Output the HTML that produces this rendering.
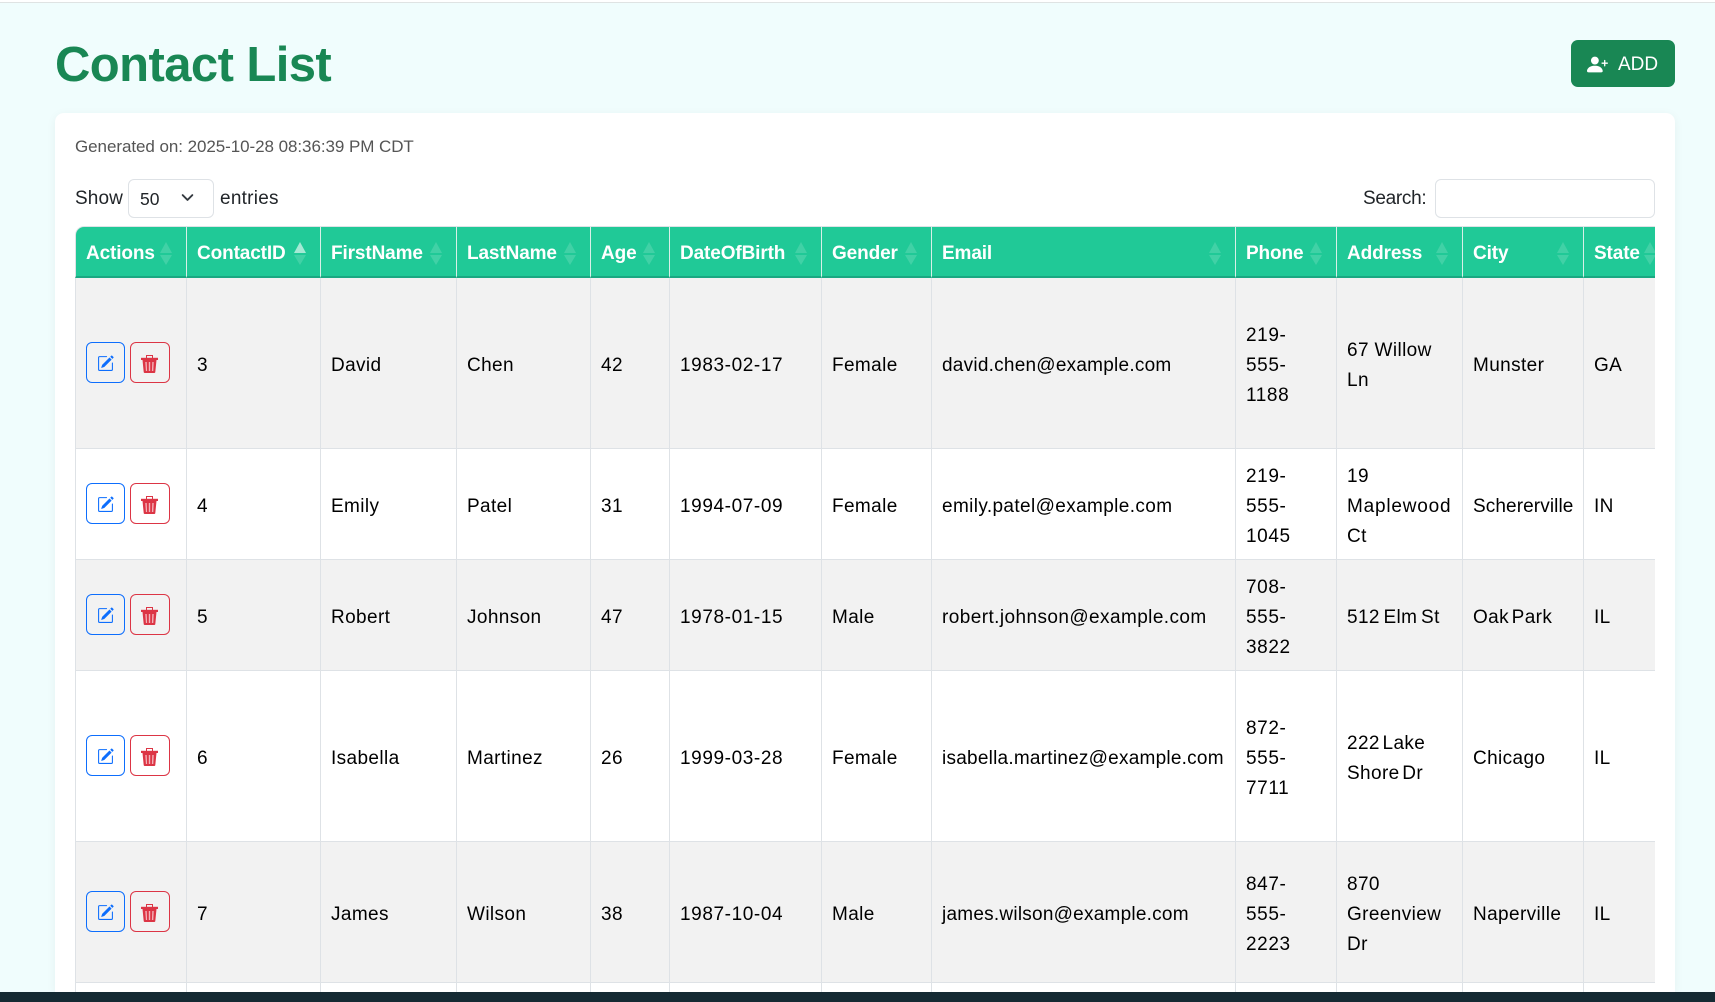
<!DOCTYPE html>
<html lang="en"><head><meta charset="utf-8"><title>Contact List</title>
<style>
*{box-sizing:border-box}
html,body{margin:0;padding:0;width:1715px;height:1002px;overflow:hidden;background:#f0fdfd;font-family:"Liberation Sans",Arial,sans-serif;color:#212529}
#root{position:relative;width:1715px;height:1002px;overflow:hidden}
.topline{position:absolute;left:0;top:0;width:1715px;height:3px;background:#fff;border-bottom:1px solid #dfe3e3}
h1{position:absolute;left:55px;top:35px;margin:0;font-size:49px;line-height:60px;font-weight:700;color:#198754;letter-spacing:-.58px}
.add{position:absolute;left:1571px;top:40px;width:104px;height:47px;background:#198754;border-radius:7px;color:#fff;font-size:19px;line-height:49px;padding-left:47px}
.add svg{position:absolute;left:16px;top:14px}
.card{position:absolute;left:55px;top:113px;width:1620px;height:879px;background:#fff;border-radius:9px 9px 0 0;box-shadow:0 2px 10px rgba(0,0,0,.05)}
.gen{position:absolute;left:75px;top:135px;font-size:17px;line-height:24px;color:#555;letter-spacing:-.06px}
.lbl{position:absolute;top:187px;font-size:19px;line-height:24px;color:#212529}
.sel{position:absolute;left:128px;top:179px;width:86px;height:39px;border:1px solid #dee2e6;border-radius:6px;font-size:17.5px;line-height:38px;padding-left:11px}
.sel svg{position:absolute;left:52px;top:11px}
.inp{position:absolute;left:1435px;top:179px;width:220px;height:39px;border:1px solid #dee2e6;border-radius:6px;background:#fff}
.wrap{position:absolute;left:75px;top:226px;width:1580px;height:766px;overflow:hidden;border-top-left-radius:9px}
table{border-collapse:separate;border-spacing:0;table-layout:fixed;width:1596px;font-size:19px;color:#000}
th{height:52px;background:#20c997;color:#fff;text-align:left;font-weight:700;font-size:19px;padding:5px 0 0 10px;border-right:1px solid #d8efe8;border-top:1px solid #dee2e6;border-bottom:2px solid #1aa882;position:relative;letter-spacing:-.12px;white-space:nowrap}
th:first-child{border-top-left-radius:9px}
th i{position:absolute;top:15px;right:13px;width:13px;height:23px}
th i:before,th i:after{content:"";position:absolute;left:0;border-left:6.5px solid transparent;border-right:6.5px solid transparent}
th i:before{top:0;border-bottom:11.5px solid rgba(255,255,255,.15)}
th i:after{top:12.5px;border-top:10.5px solid rgba(255,255,255,.15)}
th i.on:before{border-bottom-color:rgba(255,255,255,.6)}
td{padding:5px 0 0 10px;border-right:1px solid #dee2e6;border-bottom:1px solid #dee2e6;line-height:30px;vertical-align:middle;letter-spacing:.38px;white-space:nowrap}
td:first-child{padding:0 0 2px 10px}
td:first-child,th:first-child{border-left:1px solid #dee2e6}
td.n{letter-spacing:.6px}
td.m{letter-spacing:.24px}
tr.o td{background:#f2f2f2}
tr.e td{background:#fff}
.b{display:inline-block;height:41px;border-radius:6px;border:1px solid;position:relative;vertical-align:middle}
.be{width:39px;border-color:#0d6efd;color:#0d6efd}
.bd{width:40px;margin-left:5px;border-color:#dc3545;color:#dc3545}
.b svg{position:absolute;left:10px;top:12px}
.bar{position:absolute;left:0;top:992px;width:1715px;height:10px;background:#152a33}
</style></head><body>
<div id="root">
<svg width="0" height="0" style="position:absolute"><defs>
<symbol id="ie" viewBox="0 0 16 16"><path fill="currentColor" d="M15.502 1.940a.5.500 0 0 1 0 .706L14.459 3.690l-2-2L13.502.646a.5.500 0 0 1 .707 0l1.293 1.293zm-1.750 2.456-2-2L4.939 9.210a.5.500 0 0 0-.121.196l-.805 2.414a.25.250 0 0 0 .316.316l2.414-.805a.5.500 0 0 0 .196-.12l6.813-6.814z"/><path fill="currentColor" fill-rule="evenodd" d="M1 13.500A1.500 1.500 0 0 0 2.500 15h11a1.500 1.500 0 0 0 1.500-1.500v-6a.5.500 0 0 0-1 0v6a.5.500 0 0 1-.5.5h-11a.5.500 0 0 1-.5-.5v-11a.5.500 0 0 1 .5-.5H9a.5.500 0 0 0 0-1H2.500A1.500 1.500 0 0 0 1 2.500v11z"/></symbol>
<symbol id="it" viewBox="0 0 17 18"><path fill="none" stroke="currentColor" stroke-width="1" d="M5.500 3V.5h6V3"/><rect x="0" y="2.800" width="17" height="2.200" fill="currentColor"/><path fill="currentColor" d="M1.500 5h14l-1.200 12a1 1 0 0 1-1 1H3.700a1 1 0 0 1-1-1z"/><path fill="#f3b3ba" d="M4.300 7h1.400l.4 9H4.900zM7.800 7h1.400v9H7.800zM11.300 7h1.400l-.4 9h-1.400z"/></symbol>
</defs></svg>
<div class="topline"></div>
<h1>Contact List</h1>
<div class="add"><svg width="21" height="19" viewBox="0 0 16 14.500" fill="#fff"><path d="M1 14s-1 0-1-1 1-4 6-4 6 3 6 4-1 1-1 1H1zm5-6a3 3 0 1 0 0-6 3 3 0 0 0 0 6z"/><path d="M13.500 4.500a.5.500 0 0 1 .5.500V6.500h1.500a.5.500 0 0 1 0 1H14V9a.5.500 0 0 1-1 0V7.500h-1.500a.5.500 0 0 1 0-1H13V5a.5.500 0 0 1 .5-.5z"/></svg>ADD</div>
<div class="card"></div>
<div class="gen">Generated on: 2025-10-28 08:36:39 PM CDT</div>
<div class="lbl" style="left:75px;letter-spacing:.1px">Show</div>
<div class="sel">50<svg width="13" height="13" viewBox="0 0 16 16" fill="none" stroke="#343a40" stroke-width="2.200" stroke-linecap="round" stroke-linejoin="round"><path d="M2 5l6 6 6-6"/></svg></div>
<div class="lbl" style="left:220px;letter-spacing:.25px">entries</div>
<div class="lbl" style="left:1363px;letter-spacing:-.3px">Search:</div>
<div class="inp"></div>
<div class="wrap">
<table>
<colgroup><col style="width:112px"><col style="width:134px"><col style="width:136px"><col style="width:134px"><col style="width:79px"><col style="width:152px"><col style="width:110px"><col style="width:304px"><col style="width:101px"><col style="width:126px"><col style="width:121px"><col style="width:87px"></colgroup>
<thead><tr><th>Actions<i></i></th><th>ContactID<i class="on"></i></th><th>FirstName<i></i></th><th>LastName<i></i></th><th>Age<i></i></th><th>DateOfBirth<i></i></th><th>Gender<i></i></th><th>Email<i></i></th><th>Phone<i></i></th><th>Address<i></i></th><th>City<i></i></th><th>State<i></i></th></tr></thead>
<tbody>
<tr class="o" style="height:171px"><td><span class="b be"><svg width="17" height="17"><use href="#ie"/></svg></span><span class="b bd"><svg width="17" height="18"><use href="#it"/></svg></span></td><td>3</td><td>David</td><td>Chen</td><td>42</td><td class="n">1983-02-17</td><td>Female</td><td class="m">david.chen@example.com</td><td class="n">219-<br>555-<br>1188</td><td>67 Willow<br>Ln</td><td>Munster</td><td>GA</td></tr>
<tr class="e" style="height:111px"><td><span class="b be"><svg width="17" height="17"><use href="#ie"/></svg></span><span class="b bd"><svg width="17" height="18"><use href="#it"/></svg></span></td><td>4</td><td>Emily</td><td>Patel</td><td>31</td><td class="n">1994-07-09</td><td>Female</td><td class="m" style="letter-spacing:.38px">emily.patel@example.com</td><td class="n">219-<br>555-<br>1045</td><td>19<br><span style="letter-spacing:.8px">Maplewood</span><br>Ct</td><td style="letter-spacing:.1px">Schererville</td><td>IN</td></tr>
<tr class="o" style="height:111px"><td><span class="b be"><svg width="17" height="17"><use href="#ie"/></svg></span><span class="b bd"><svg width="17" height="18"><use href="#it"/></svg></span></td><td>5</td><td>Robert</td><td>Johnson</td><td>47</td><td class="n">1978-01-15</td><td>Male</td><td class="m" style="letter-spacing:.42px">robert.johnson@example.com</td><td class="n">708-<br>555-<br>3822</td><td style="word-spacing:-2px">512 Elm St</td><td style="word-spacing:-3px">Oak Park</td><td>IL</td></tr>
<tr class="e" style="height:171px"><td><span class="b be"><svg width="17" height="17"><use href="#ie"/></svg></span><span class="b bd"><svg width="17" height="18"><use href="#it"/></svg></span></td><td>6</td><td>Isabella</td><td>Martinez</td><td>26</td><td class="n">1999-03-28</td><td>Female</td><td class="m">isabella.martinez@example.com</td><td class="n">872-<br>555-<br>7711</td><td style="word-spacing:-3px">222 Lake<br>Shore Dr</td><td>Chicago</td><td>IL</td></tr>
<tr class="o" style="height:141px"><td><span class="b be"><svg width="17" height="17"><use href="#ie"/></svg></span><span class="b bd"><svg width="17" height="18"><use href="#it"/></svg></span></td><td>7</td><td>James</td><td>Wilson</td><td>38</td><td class="n">1987-10-04</td><td>Male</td><td class="m">james.wilson@example.com</td><td class="n">847-<br>555-<br>2223</td><td>870<br>Greenview<br>Dr</td><td>Naperville</td><td>IL</td></tr>
<tr class="e" style="height:60px"><td></td><td></td><td></td><td></td><td></td><td></td><td></td><td></td><td></td><td></td><td></td><td></td></tr>
</tbody></table>
</div>
<div class="bar"></div>
</div>
</body></html>
